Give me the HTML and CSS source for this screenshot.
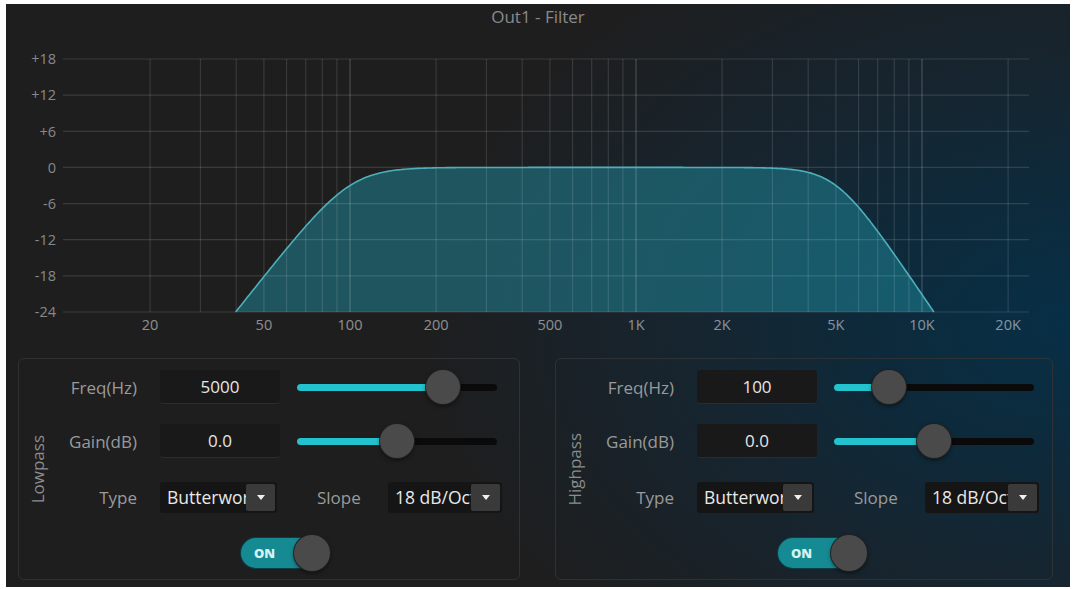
FILE: index.html
```html
<!DOCTYPE html>
<html lang="en">
<head>
  <meta charset="UTF-8" />
  <title>Out1 - Filter</title>
  <link rel="stylesheet" href="styles.css">
</head>
<body>
  <div id="panel">
    <div class="title">Out1 - Filter</div>

    <!-- Response graph, filled in by app.js -->
    <svg id="graph" width="1064" height="312" viewBox="0 0 1064 312"></svg>

    <div class="groups">
      <!-- Lowpass -->
      <div class="group lowpass">
        <div class="side"><span>Lowpass</span></div>
        <div class="rows">
          <div class="row row-freq">
            <span class="label">Freq(Hz)</span>
            <div class="field">5000</div>
            <div class="slider">
              <div class="fill" style="width: 73%"></div>
              <div class="thumb" style="left: 73%"></div>
            </div>
          </div>
          <div class="row row-gain">
            <span class="label">Gain(dB)</span>
            <div class="field">0.0</div>
            <div class="slider">
              <div class="fill" style="width: 50%"></div>
              <div class="thumb" style="left: 50%"></div>
            </div>
          </div>
          <div class="row row-type">
            <span class="label">Type</span>
            <div class="select">
              <span class="value">Butterworth</span>
              <span class="arrow"></span>
            </div>
            <span class="label slope">Slope</span>
            <div class="select narrow">
              <span class="value">18 dB/Octave</span>
              <span class="arrow"></span>
            </div>
          </div>
          <div class="row row-toggle">
            <div class="toggle">
              <div class="track">ON</div>
              <div class="knob"></div>
            </div>
          </div>
        </div>
      </div>

      <!-- Highpass -->
      <div class="group highpass">
        <div class="side"><span>Highpass</span></div>
        <div class="rows">
          <div class="row row-freq">
            <span class="label">Freq(Hz)</span>
            <div class="field">100</div>
            <div class="slider">
              <div class="fill" style="width: 27.5%"></div>
              <div class="thumb" style="left: 27.5%"></div>
            </div>
          </div>
          <div class="row row-gain">
            <span class="label">Gain(dB)</span>
            <div class="field">0.0</div>
            <div class="slider">
              <div class="fill" style="width: 50%"></div>
              <div class="thumb" style="left: 50%"></div>
            </div>
          </div>
          <div class="row row-type">
            <span class="label">Type</span>
            <div class="select">
              <span class="value">Butterworth</span>
              <span class="arrow"></span>
            </div>
            <span class="label slope">Slope</span>
            <div class="select narrow">
              <span class="value">18 dB/Octave</span>
              <span class="arrow"></span>
            </div>
          </div>
          <div class="row row-toggle">
            <div class="toggle">
              <div class="track">ON</div>
              <div class="knob"></div>
            </div>
          </div>
        </div>
      </div>
    </div>
  </div>

  <script src="app.js"></script>
</body>
</html>
```

FILE: styles.css
```css
body {
  margin: 0;
  background-color: #ffffff;
  font-family: "Open Sans", "Noto Sans", sans-serif;
}

#panel {
  width: 1064px;
  height: 583px;
  margin: 4px 0 0 6px;
  display: flex;
  flex-direction: column;
  background:
    radial-gradient(ellipse 640px 430px at 100% 55%, #082f47 0%, #0d2a3b 30%, #162530 58%, rgba(30, 30, 31, 0) 100%),
    #1e1e1f;
}

.title {
  height: 26px;
  line-height: 26px;
  text-align: center;
  font-size: 17px;
  color: #8a8a8a;
}

#graph {
  display: block;
}

.groups {
  display: flex;
  gap: 35px;
  padding: 16px 0 0 12px;
}

.group {
  height: 222px;
  box-sizing: border-box;
  border: 1px solid #2f3235;
  border-radius: 6px;
  display: flex;
}

.group.lowpass {
  width: 502px;
}

.group.highpass {
  width: 498px;
}

.side {
  width: 37px;
  display: flex;
  align-items: center;
  justify-content: center;
}

.side span {
  writing-mode: vertical-rl;
  transform: rotate(180deg);
  font-size: 17px;
  color: #8c8c8c;
}

.rows {
  padding-top: 11px;
}

.row {
  display: flex;
  align-items: center;
}

.row-freq {
  height: 34px;
}

.row-gain {
  height: 34px;
  margin-top: 20px;
}

.row-type {
  height: 31px;
  margin-top: 24px;
}

.row-toggle {
  height: 36px;
  margin-top: 22px;
}

.label {
  width: 81px;
  margin-right: 23px;
  text-align: right;
  font-size: 17px;
  color: #9a9a9a;
}

.label.slope {
  width: 46px;
  margin: 0 25px 0 40px;
  text-align: left;
}

.field {
  width: 120px;
  height: 34px;
  line-height: 34px;
  text-align: center;
  font-size: 17px;
  font-weight: 500;
  color: #e6e6e6;
  background-color: #19191a;
  border-radius: 3px;
  box-shadow: inset 0 -1px 0 #2a2c2e;
}

.slider {
  position: relative;
  width: 200px;
  height: 7px;
  margin-left: 17px;
  background-color: #0a0a0a;
  border-radius: 4px;
}

.slider .fill {
  height: 100%;
  background-color: #22c3ce;
  border-radius: 4px;
}

.slider .thumb {
  position: absolute;
  top: 50%;
  width: 34px;
  height: 34px;
  margin: -17px 0 0 -17px;
  border-radius: 50%;
  background-color: #4a4a4a;
  box-shadow: 0 0 0 1px #202020, 0 2px 4px rgba(0, 0, 0, 0.55);
}

.select {
  display: flex;
  width: 117px;
  height: 31px;
  background-color: #151515;
  border-radius: 3px;
  overflow: hidden;
}

.select.narrow {
  width: 114px;
}

.select .value {
  flex: 1;
  min-width: 0;
  padding-left: 7px;
  line-height: 31px;
  font-size: 17.5px;
  font-weight: 500;
  color: #e8e8e8;
  white-space: nowrap;
  overflow: hidden;
}

.select .arrow {
  width: 29px;
  margin: 2px 2px 2px 0;
  background-color: #3a3a3a;
  border-radius: 2px;
  display: flex;
  align-items: center;
  justify-content: center;
}

.select .arrow::after {
  content: "";
  border-left: 4px solid transparent;
  border-right: 4px solid transparent;
  border-top: 5px solid #f0f0f0;
}

.toggle {
  display: flex;
  align-items: center;
  margin-left: 185px;
}

.toggle .track {
  width: 63px;
  height: 30px;
  padding-left: 13px;
  line-height: 30px;
  border-radius: 15px;
  background-color: #168a93;
  box-shadow: 0 0 0 1px #0d3e44;
  font-size: 13px;
  font-weight: 800;
  color: #d4f1f3;
}

.toggle .knob {
  width: 36px;
  height: 36px;
  margin-left: -23px;
  border-radius: 50%;
  background-color: #4a4a4a;
  box-shadow: 0 0 0 1px #202020, 0 2px 4px rgba(0, 0, 0, 0.55);
}
```

FILE: app.js
```js
const svg = document.getElementById("graph");
const NS = "http://www.w3.org/2000/svg";

// grid extents (svg coordinates)
const LEFT = 57, RIGHT = 1023;
const TOP = 29, ROW = 36.14;

function fx(f) {
  return 344 + (Math.log10(f) - 2) * 286;
}

function fy(db) {
  return TOP + (18 - db) / 6 * ROW;
}

function add(tag, attrs, text) {
  const el = document.createElementNS(NS, tag);
  for (const k in attrs) el.setAttribute(k, attrs[k]);
  if (text !== undefined) el.textContent = text;
  svg.appendChild(el);
  return el;
}

// highpass 100 Hz, lowpass 5000 Hz
function response(f) {
  const hp = 1 / (1 + Math.pow(100 / f, 6));
  const lp = 1 / (1 + Math.pow(f / 5000, 7));
  return 10 * Math.log10(hp * lp);
}

function crossing(lo, hi, rising) {
  for (let i = 0; i < 60; i++) {
    const mid = Math.sqrt(lo * hi);
    const above = response(mid) >= -24;
    if (above === rising) hi = mid; else lo = mid;
  }
  return Math.sqrt(lo * hi);
}

const f1 = crossing(10, 1000, true);
const f2 = crossing(1000, 40000, false);

let line = "";
const steps = 400;
for (let i = 0; i <= steps; i++) {
  const f = f1 * Math.pow(f2 / f1, i / steps);
  const db = Math.max(-24, response(f));
  line += (i ? " L" : "M") + fx(f).toFixed(2) + " " + fy(db).toFixed(2);
}

// fill under the curve
add("path", { d: line + " Z", fill: "rgba(32, 140, 158, 0.5)" });

// horizontal grid
for (let i = 0; i < 8; i++) {
  const y = TOP + i * ROW;
  add("line", { x1: LEFT, x2: RIGHT, y1: y, y2: y, stroke: "rgba(255,255,255,0.13)", "stroke-width": 1.2 });
}

// vertical grid
const freqs = [];
for (let f = 20; f < 100; f += 10) freqs.push(f);
for (let f = 100; f < 1000; f += 100) freqs.push(f);
for (let f = 1000; f <= 10000; f += 1000) freqs.push(f);
freqs.push(20000);

freqs.forEach(f => {
  const x = fx(f);
  const decade = f === 100 || f === 1000 || f === 10000;
  add("line", {
    x1: x, x2: x, y1: fy(18), y2: fy(-24),
    stroke: decade ? "rgba(255,255,255,0.2)" : "rgba(255,255,255,0.12)",
    "stroke-width": 1.2
  });
});

// curve edge
add("path", { d: line, fill: "none", stroke: "#4cb0ba", "stroke-width": 1.6 });

// y labels
["+18", "+12", "+6", "0", "-6", "-12", "-18", "-24"].forEach((t, i) => {
  add("text", {
    x: 50, y: TOP + i * ROW, dy: "0.36em",
    "text-anchor": "end", "font-size": 14.5, fill: "rgba(255,255,255,0.48)",
    "font-family": "Open Sans, sans-serif"
  }, t);
});

// x labels
[[20, "20"], [50, "50"], [100, "100"], [200, "200"], [500, "500"],
 [1000, "1K"], [2000, "2K"], [5000, "5K"], [10000, "10K"], [20000, "20K"]].forEach(([f, t]) => {
  add("text", {
    x: fx(f), y: 300,
    "text-anchor": "middle", "font-size": 14.5, fill: "rgba(255,255,255,0.5)",
    "font-family": "Open Sans, sans-serif"
  }, t);
});
```
